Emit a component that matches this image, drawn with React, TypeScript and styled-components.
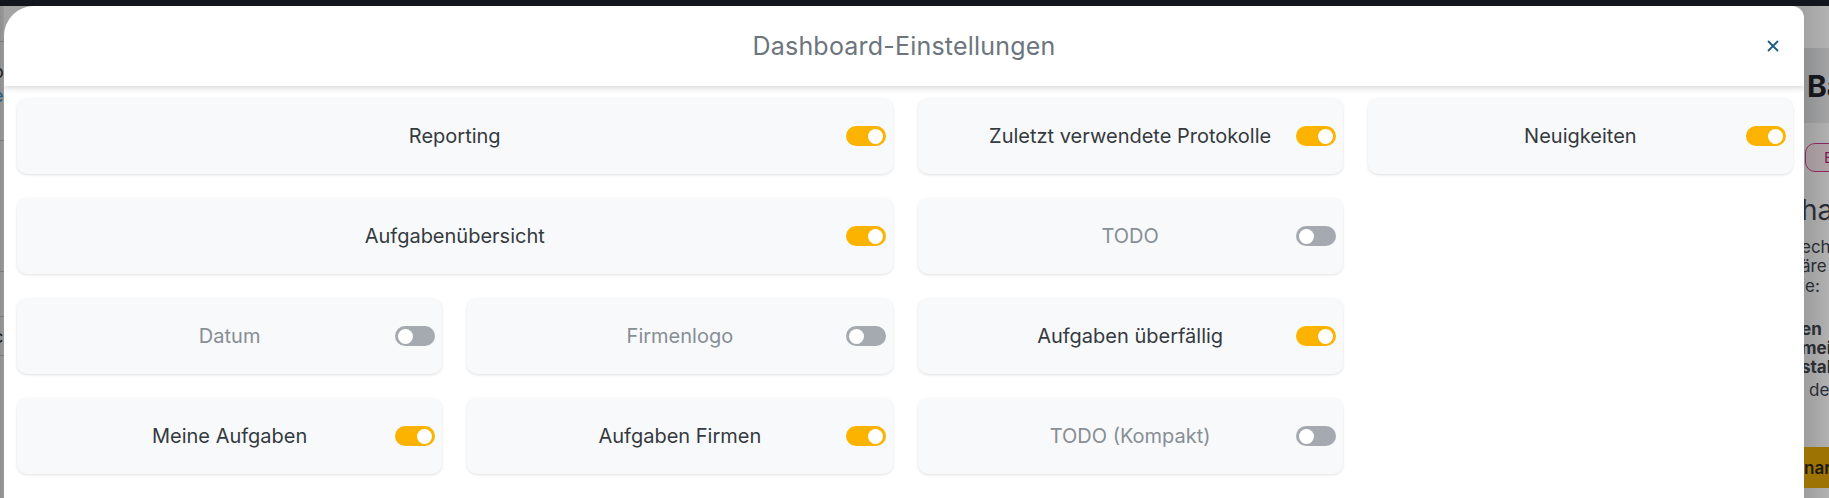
import React from "react";
import styled, { createGlobalStyle } from "styled-components";

const Global = createGlobalStyle`
  html, body { margin: 0; padding: 0; }
  body {
    width: 1829px;
    height: 498px;
    overflow: hidden;
    font-family: Inter, "Noto Sans", "Liberation Sans", sans-serif;
    background: #a4a4a4;
  }
`;

const Screen = styled.div`
  width: 1829px;
  height: 498px;
  display: grid;
  grid-template-rows: 6px 1fr;
  overflow: hidden;
`;

const TopBar = styled.div`
  background: #13161d;
`;

const Stage = styled.div`
  display: grid;
  grid-template-columns: 4px 1800px 1fr;
  min-height: 0;
`;

const LeftPage = styled.div`
  background: linear-gradient(90deg, #8f8f8f, #9a9a9a);
  display: flex;
  flex-direction: column;
  overflow: hidden;
`;

const LeftLine = styled.div<{ $mt: number }>`
  margin-top: ${(p) => p.$mt}px;
  height: 1px;
  background: #7c7c7c;
  flex-shrink: 0;
`;

const LeftGlyph = styled.div<{ $mt: number; $color: string }>`
  margin-top: ${(p) => p.$mt}px;
  margin-left: -7px;
  font-size: 18px;
  line-height: 20px;
  color: ${(p) => p.$color};
  flex-shrink: 0;
`;

const RightPage = styled.div`
  background: linear-gradient(90deg, #9d9d9d, #b1b1b1);
  overflow: hidden;
  display: flex;
  flex-direction: column;
  white-space: nowrap;
`;

const RightTop = styled.div`
  height: 42px;
  flex-shrink: 0;
  background: linear-gradient(90deg, #a3a3a3, #b3b3b3);
`;

const RightBand = styled.div`
  height: 75px;
  flex-shrink: 0;
  background: linear-gradient(90deg, #8e8f90, #a4a4a5);
  display: flex;
  align-items: center;
  padding-left: 3px;
  font-size: 30px;
  font-weight: 700;
  color: #15171c;
`;

const RightBadge = styled.div`
  margin: 20px 0 0 1px;
  height: 29px;
  width: 60px;
  box-sizing: border-box;
  border: 1.5px solid #8a2a5c;
  border-radius: 10px;
  background: rgba(170, 120, 140, 0.25);
  display: flex;
  align-items: center;
  padding-left: 18px;
  font-size: 15px;
  color: #7a1f50;
  flex-shrink: 0;
`;

const RightText = styled.div<{ $size: number; $weight?: number; $mt: number; $indent?: number }>`
  margin-top: ${(p) => p.$mt}px;
  margin-left: ${(p) => (p.$indent ?? 0) - 3}px;
  font-size: ${(p) => p.$size}px;
  font-weight: ${(p) => p.$weight ?? 400};
  line-height: ${(p) => (p.$size > 20 ? 34 : 19)}px;
  color: #2a2d33;
  flex-shrink: 0;
`;

const RightButton = styled.div`
  margin-top: 47px;
  height: 41px;
  background: #9d7404;
  display: flex;
  align-items: center;
  font-size: 17px;
  font-weight: 600;
  color: #1e1a10;
  flex-shrink: 0;
`;

const Modal = styled.div`
  background: #ffffff;
  border-radius: 30px 12px 0 0;
  display: flex;
  flex-direction: column;
  min-height: 0;
  overflow: hidden;
`;

const Header = styled.div`
  height: 80px;
  flex-shrink: 0;
  display: grid;
  grid-template-columns: 60px 1fr 60px;
  align-items: center;
  box-shadow: 0 2px 6px rgba(0, 0, 0, 0.16);
  position: relative;
  z-index: 1;
`;

const Title = styled.h2`
  grid-column: 2;
  margin: 0;
  text-align: center;
  font-size: 25px;
  font-weight: 400;
  color: #6c757d;
  letter-spacing: 0.2px;
`;

const CloseButton = styled.button`
  grid-column: 3;
  justify-self: start;
  margin-left: 19px;
  width: 20px;
  height: 20px;
  padding: 0;
  border: none;
  background: transparent;
  display: flex;
  align-items: center;
  justify-content: center;
  cursor: pointer;
`;

const Body = styled.div`
  padding: 12px 11px 0 13px;
  display: grid;
  grid-template-columns: repeat(4, 1fr);
  grid-auto-rows: 76px;
  column-gap: 25px;
  row-gap: 24px;
`;

const Card = styled.div<{ $col: string; $row: number }>`
  grid-column: ${(p) => p.$col};
  grid-row: ${(p) => p.$row};
  background: #f8f9fa;
  border-radius: 10px;
  box-shadow: 0 1px 3px rgba(0, 0, 0, 0.12);
  display: grid;
  grid-template-columns: 40px 1fr 40px;
  align-items: center;
  padding: 0 7px;
`;

const Label = styled.span<{ $on: boolean }>`
  grid-column: 2;
  text-align: center;
  font-size: 20px;
  font-weight: 400;
  color: ${(p) => (p.$on ? "#343a40" : "#868e96")};
`;

const Switch = styled.span<{ $on: boolean }>`
  grid-column: 3;
  width: 40px;
  height: 20px;
  border-radius: 10px;
  background: ${(p) => (p.$on ? "#fbb300" : "#a5aab1")};
  display: flex;
  align-items: center;
  justify-content: ${(p) => (p.$on ? "flex-end" : "flex-start")};
  padding: 0 3px;
  box-sizing: border-box;
`;

const Knob = styled.span`
  width: 15px;
  height: 15px;
  border-radius: 50%;
  background: #ffffff;
`;

type Item = { label: string; on: boolean; col: string; row: number };

const items: Item[] = [
  { label: "Reporting", on: true, col: "1 / span 2", row: 1 },
  { label: "Zuletzt verwendete Protokolle", on: true, col: "3", row: 1 },
  { label: "Neuigkeiten", on: true, col: "4", row: 1 },
  { label: "Aufgabenübersicht", on: true, col: "1 / span 2", row: 2 },
  { label: "TODO", on: false, col: "3", row: 2 },
  { label: "Datum", on: false, col: "1", row: 3 },
  { label: "Firmenlogo", on: false, col: "2", row: 3 },
  { label: "Aufgaben überfällig", on: true, col: "3", row: 3 },
  { label: "Meine Aufgaben", on: true, col: "1", row: 4 },
  { label: "Aufgaben Firmen", on: true, col: "2", row: 4 },
  { label: "TODO (Kompakt)", on: false, col: "3", row: 4 },
];

export default function App() {
  return (
    <>
      <Global />
      <Screen>
        <TopBar />
        <Stage>
          <LeftPage>
            <LeftLine $mt={35} />
            <LeftGlyph $mt={20} $color="#1c1c1c">o</LeftGlyph>
            <LeftGlyph $mt={4} $color="#1d5c80">e</LeftGlyph>
            <LeftLine $mt={34} />
            <LeftLine $mt={130} />
            <LeftLine $mt={44} />
            <LeftGlyph $mt={10} $color="#1c1c1c">c</LeftGlyph>
            <LeftLine $mt={8} />
          </LeftPage>
          <Modal>
            <Header>
              <Title>Dashboard-Einstellungen</Title>
              <CloseButton aria-label="Schließen">
                <svg width="12" height="12" viewBox="0 0 12 12">
                  <path d="M1.5 1.5 L10.5 10.5 M10.5 1.5 L1.5 10.5" stroke="#1d5c80" strokeWidth="1.8" strokeLinecap="round" />
                </svg>
              </CloseButton>
            </Header>
            <Body>
              {items.map((it) => (
                <Card key={it.label} $col={it.col} $row={it.row}>
                  <Label $on={it.on}>{it.label}</Label>
                  <Switch $on={it.on}>
                    <Knob />
                  </Switch>
                </Card>
              ))}
            </Body>
          </Modal>
          <RightPage>
            <RightTop />
            <RightBand>Bau</RightBand>
            <RightBadge>E</RightBadge>
            <RightText $size={28} $mt={21}>hat</RightText>
            <RightText $size={17} $mt={11}>echt</RightText>
            <RightText $size={17} $mt={0}>äre</RightText>
            <RightText $size={17} $mt={1}>ie:</RightText>
            <RightText $size={17} $weight={700} $mt={24}>en</RightText>
            <RightText $size={17} $weight={700} $mt={0}>mei</RightText>
            <RightText $size={17} $weight={700} $mt={0}>stal</RightText>
            <RightText $size={17} $mt={4} $indent={8}>de</RightText>
            <RightButton>nar</RightButton>
          </RightPage>
        </Stage>
      </Screen>
    </>
  );
}
